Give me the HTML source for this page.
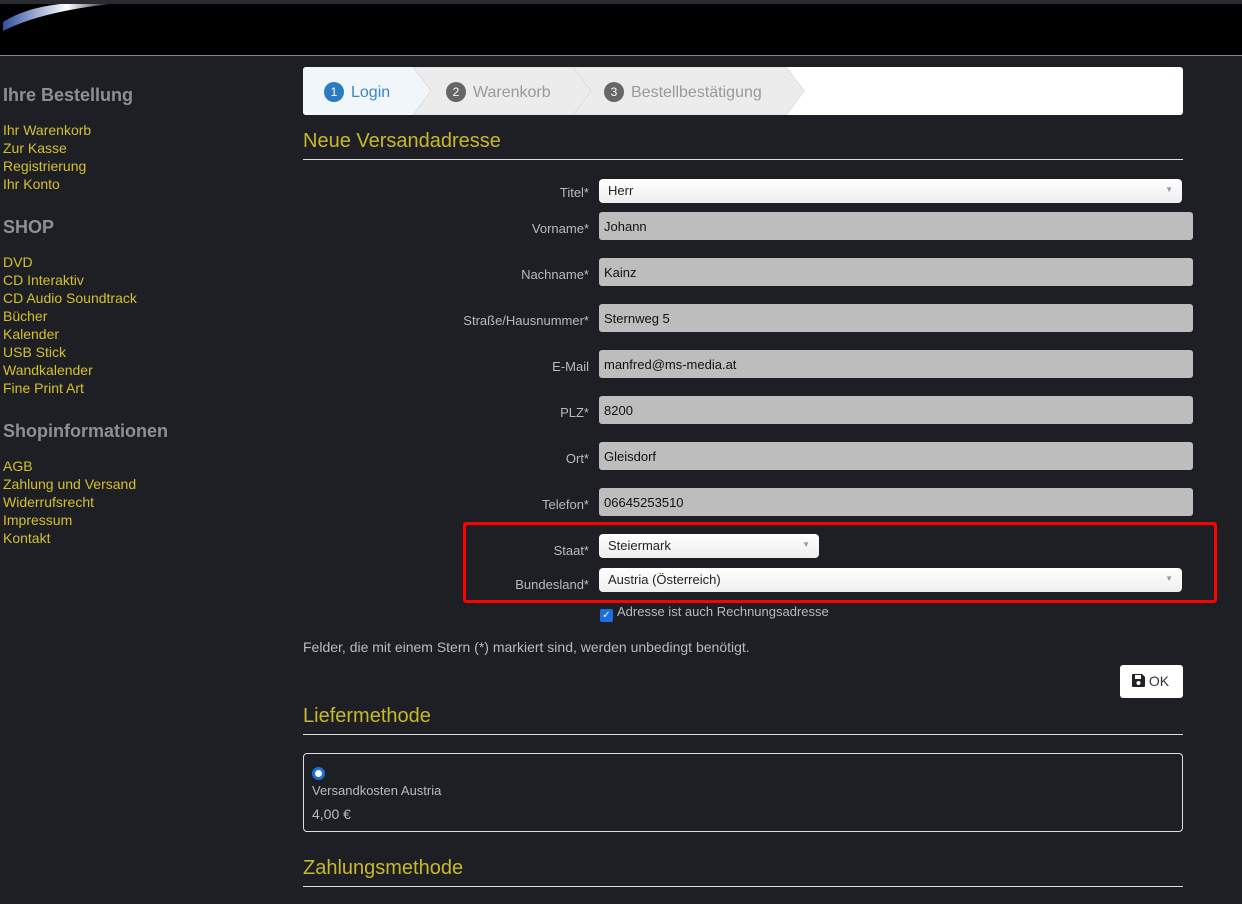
<!DOCTYPE html>
<html><head><meta charset="utf-8"><style>
*{margin:0;padding:0;box-sizing:border-box}
body{width:1242px;height:904px;background:#1e1f24;font-family:"Liberation Sans",sans-serif;position:relative;overflow:hidden}
.a{position:absolute}
.top{left:0;top:0;width:1242px;height:4px;background:#2a2b31}
.hdr{left:0;top:4px;width:1242px;height:52px;background:#000;border-bottom:1px solid #888}
.sb h3{position:absolute;left:3px;color:#8e8f93;font-size:18px;font-weight:bold}
.sb a{position:absolute;left:3px;color:#d4c02c;font-size:14px;text-decoration:none}
.lbl{position:absolute;right:653px;color:#b9bac0;font-size:13px;text-align:right}
.inp{position:absolute;left:599px;width:594px;height:28px;background:#bdbdbd;border-radius:3px;font-size:13px;color:#111;padding:7px 5px}
.sel{position:absolute;left:599px;width:583px;height:24px;background:linear-gradient(#fff,#eee);border-radius:4px;font-size:13px;color:#222;padding:4px 9px}
.sel:after{content:"▼";position:absolute;right:9px;top:6px;font-size:8px;color:#999}
h2{position:absolute;left:303px;color:#c8b92a;font-size:20px;font-weight:normal}
.ln{position:absolute;left:303px;width:880px;height:1px;background:#ddd}
.num{display:inline-block;width:20px;height:20px;border-radius:10px;color:#fff;font-size:12px;text-align:center;line-height:20px;vertical-align:1px;margin-right:7px}
</style></head><body>
<div class="a top"></div>
<div class="a hdr"><svg width="120" height="30" style="position:absolute;left:0;top:0"><defs><linearGradient id="g" x1="0" x2="1"><stop offset="0" stop-color="#3050a0"/><stop offset=".6" stop-color="#fff"/><stop offset="1" stop-color="#222"/></linearGradient></defs><path d="M3 27 Q40 8 110 0 L60 0 Q25 4 3 18Z" fill="url(#g)"/></svg></div>
<div class="sb">
<h3 style="top:85px">Ihre Bestellung</h3>
<a style="top:122px">Ihr Warenkorb</a><a style="top:140px">Zur Kasse</a><a style="top:158px">Registrierung</a><a style="top:176px">Ihr Konto</a>
<h3 style="top:217px">SHOP</h3>
<a style="top:254px">DVD</a><a style="top:272px">CD Interaktiv</a><a style="top:290px">CD Audio Soundtrack</a><a style="top:308px">Bücher</a><a style="top:326px">Kalender</a><a style="top:344px">USB Stick</a><a style="top:362px">Wandkalender</a><a style="top:380px">Fine Print Art</a>
<h3 style="top:421px">Shopinformationen</h3>
<a style="top:458px">AGB</a><a style="top:476px">Zahlung und Versand</a><a style="top:494px">Widerrufsrecht</a><a style="top:512px">Impressum</a><a style="top:530px">Kontakt</a>
</div>
<div class="a" style="left:303px;top:67px;width:880px;height:48px;background:#fff;border-radius:3px;overflow:hidden">
<svg width="880" height="48" style="position:absolute;left:0;top:0"><path d="M0 0H110L128 24L110 48H0Z" fill="#f1f6fb"/><path d="M110 0H270L288 24L270 48H110L128 24Z" fill="#ececec" stroke="#ddd"/><path d="M270 0H483L501 24L483 48H270L288 24Z" fill="#ececec" stroke="#ddd"/></svg>
<div class="a" style="left:21px;top:15px;font-size:16px;color:#3a86c3"><span class="num" style="background:#2b7bc0">1</span>Login</div>
<div class="a" style="left:143px;top:15px;font-size:16px;color:#999"><span class="num" style="background:#666">2</span>Warenkorb</div>
<div class="a" style="left:301px;top:15px;font-size:16px;color:#999"><span class="num" style="background:#666">3</span>Bestellbestätigung</div>
</div>
<h2 style="top:130px">Neue Versandadresse</h2><div class="ln" style="top:159px"></div>
<div class="lbl" style="top:185px">Titel*</div><div class="sel" style="top:179px">Herr</div>
<div class="lbl" style="top:221px">Vorname*</div><div class="inp" style="top:212px">Johann</div>
<div class="lbl" style="top:267px">Nachname*</div><div class="inp" style="top:258px">Kainz</div>
<div class="lbl" style="top:313px">Straße/Hausnummer*</div><div class="inp" style="top:304px">Sternweg 5</div>
<div class="lbl" style="top:359px">E-Mail</div><div class="inp" style="top:350px">manfred@ms-media.at</div>
<div class="lbl" style="top:405px">PLZ*</div><div class="inp" style="top:396px">8200</div>
<div class="lbl" style="top:451px">Ort*</div><div class="inp" style="top:442px">Gleisdorf</div>
<div class="lbl" style="top:497px">Telefon*</div><div class="inp" style="top:488px">06645253510</div>
<div class="a" style="left:463px;top:522px;width:754px;height:81px;border:3px solid #f00;border-radius:3px"></div>
<div class="lbl" style="top:543px">Staat*</div><div class="sel" style="top:534px;width:220px">Steiermark</div>
<div class="lbl" style="top:577px">Bundesland*</div><div class="sel" style="top:568px">Austria (Österreich)</div>
<div class="a" style="left:600px;top:609px;width:13px;height:13px;background:#1a6fe0;border-radius:2px;color:#fff;font-size:10px;line-height:13px;text-align:center">✓</div>
<div class="a" style="left:617px;top:604px;font-size:13px;color:#b9bac0">Adresse ist auch Rechnungsadresse</div>
<div class="a" style="left:303px;top:639px;font-size:14px;color:#b9bac0">Felder, die mit einem Stern (*) markiert sind, werden unbedingt benötigt.</div>
<div class="a" style="left:1120px;top:665px;width:63px;height:33px;background:#fff;border-radius:3px;font-size:14px;color:#333;padding:8px 0 0 12px"><svg width="13" height="13" viewBox="0 0 13 13" style="vertical-align:-1px"><path d="M0 1Q0 0 1 0H10L13 3V12Q13 13 12 13H1Q0 13 0 12Z" fill="#222"/><rect x="3" y="1" width="6" height="4" fill="#fff"/><circle cx="6.5" cy="9" r="2" fill="#fff"/></svg> OK</div>
<h2 style="top:705px">Liefermethode</h2><div class="ln" style="top:734px"></div>
<div class="a" style="left:303px;top:753px;width:880px;height:79px;border:1px solid #ddd;border-radius:4px"></div>
<div class="a" style="left:312px;top:767px;width:13px;height:13px;border-radius:50%;border:3px solid #1a6fe0;background:#fff"></div>
<div class="a" style="left:312px;top:783px;font-size:13px;color:#b9bac0">Versandkosten Austria</div>
<div class="a" style="left:312px;top:806px;font-size:14px;color:#b9bac0">4,00 €</div>
<h2 style="top:857px">Zahlungsmethode</h2><div class="ln" style="top:886px"></div>
</body></html>
